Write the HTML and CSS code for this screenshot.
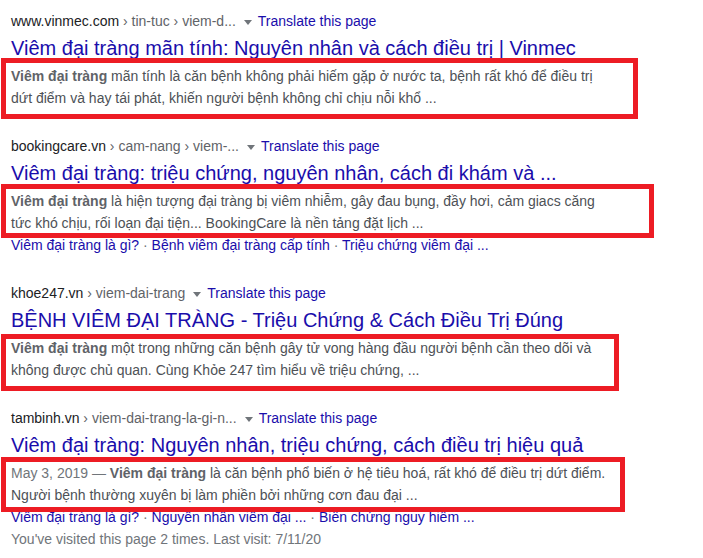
FILE: index.html
```html
<!DOCTYPE html>
<html lang="vi">
<head>
<meta charset="utf-8">
<title>Viêm đại tràng</title>
<link rel="stylesheet" href="styles.css">
</head>
<body>
<div class="results">
  <div class="result">
    <div class="url"><span class="domain">www.vinmec.com</span><span class="path"> › tin-tuc › viem-d...</span><span class="caret"></span><a class="translate">Translate this page</a></div>
    <h3 class="title">Viêm đại tràng mãn tính: Nguyên nhân và cách điều trị | Vinmec</h3>
    <div class="snippet box-1"><b>Viêm đại tràng</b> mãn tính là căn bệnh không phải hiếm gặp ở nước ta, bệnh rất khó để điều trị<br>dứt điểm và hay tái phát, khiến người bệnh không chỉ chịu nỗi khổ ...</div>
  </div>
  <div class="result">
    <div class="url"><span class="domain">bookingcare.vn</span><span class="path"> › cam-nang › viem-...</span><span class="caret"></span><a class="translate">Translate this page</a></div>
    <h3 class="title">Viêm đại tràng: triệu chứng, nguyên nhân, cách đi khám và ...</h3>
    <div class="snippet box-2"><b>Viêm đại tràng</b> là hiện tượng đại tràng bị viêm nhiễm, gây đau bụng, đầy hơi, cảm giacs căng<br>tức khó chịu, rối loạn đại tiện... BookingCare là nền tảng đặt lịch ...</div>
    <div class="sitelinks"><a>Viêm đại tràng là gì?</a><span class="sep"> · </span><a>Bệnh viêm đại tràng cấp tính</a><span class="sep"> · </span><a>Triệu chứng viêm đại ...</a></div>
  </div>
  <div class="result">
    <div class="url"><span class="domain">khoe247.vn</span><span class="path"> › viem-dai-trang</span><span class="caret"></span><a class="translate">Translate this page</a></div>
    <h3 class="title">BỆNH VIÊM ĐẠI TRÀNG - Triệu Chứng &amp; Cách Điều Trị Đúng</h3>
    <div class="snippet box-3"><b>Viêm đại tràng</b> một trong những căn bệnh gây tử vong hàng đầu người bệnh cần theo dõi và<br>không được chủ quan. Cùng Khỏe 247 tìm hiểu về triệu chứng, ...</div>
  </div>
  <div class="result">
    <div class="url"><span class="domain">tambinh.vn</span><span class="path"> › viem-dai-trang-la-gi-n...</span><span class="caret"></span><a class="translate">Translate this page</a></div>
    <h3 class="title">Viêm đại tràng: Nguyên nhân, triệu chứng, cách điều trị hiệu quả</h3>
    <div class="snippet box-4"><span class="date">May 3, 2019 — </span><b>Viêm đại tràng</b> là căn bệnh phổ biến ở hệ tiêu hoá, rất khó để điều trị dứt điểm.<br>Người bệnh thường xuyên bị làm phiền bởi những cơn đau đại ...</div>
    <div class="sitelinks"><a>Viêm đại tràng là gì?</a><span class="sep"> · </span><a>Nguyên nhân viêm đại ...</a><span class="sep"> · </span><a>Biến chứng nguy hiểm ...</a></div>
    <div class="visited">You've visited this page 2 times. Last visit: 7/11/20</div>
  </div>
</div>
</body>
</html>
```
FILE: styles.css
```css
html, body {
  margin: 0;
  padding: 0;
  background: #fff;
}
body {
  font-family: "Liberation Sans", Arial, sans-serif;
  font-size: 14px;
  color: #4d5156;
}
.results {
  padding: 11px 0 0 11px;
}
.result + .result {
  margin-top: 27px;
}
.url {
  line-height: 20px;
  height: 20px;
  white-space: nowrap;
}
.domain {
  color: #202124;
}
.path {
  color: #5f6368;
}
.caret {
  display: inline-block;
  width: 0;
  height: 0;
  border-left: 4px solid transparent;
  border-right: 4px solid transparent;
  border-top: 5px solid #70757a;
  margin: 0 6px 0 8px;
  vertical-align: middle;
}
.translate {
  color: #1a0dab;
}
.title {
  margin: 4px 0 0 0;
  font-size: 20px;
  line-height: 26px;
  font-weight: normal;
  color: #1a0dab;
  white-space: nowrap;
}
.snippet {
  position: relative;
  margin-top: 4px;
  line-height: 22px;
  white-space: nowrap;
}
.snippet b {
  color: #5f6368;
}
.snippet::after {
  content: "";
  position: absolute;
  left: -10px;
  box-sizing: border-box;
  border: 5px solid #ed1c24;
  pointer-events: none;
}
.box-1::after { top: -7px; height: 61px; width: 637px; }
.box-2::after { top: -6px; height: 54px; width: 653px; }
.box-3::after { top: -3px; height: 57px; width: 618px; }
.box-4::after { top: -5px; height: 55px; width: 624px; }
.date {
  color: #70757a;
}
.sitelinks {
  line-height: 22px;
  white-space: nowrap;
}
.sitelinks a {
  color: #1a0dab;
}
.sep {
  color: #70757a;
}
.visited {
  line-height: 22px;
  color: #70757a;
}
```
